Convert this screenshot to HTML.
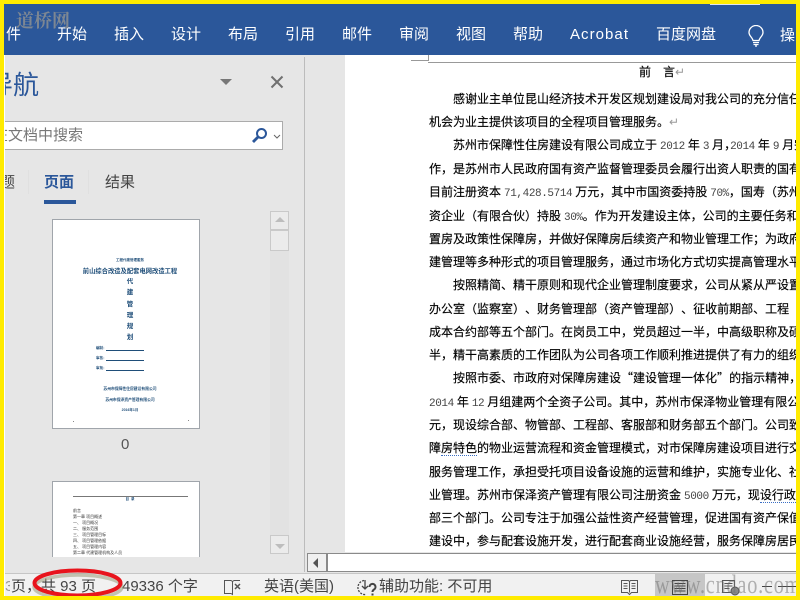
<!DOCTYPE html>
<html lang="zh"><head><meta charset="utf-8"><title>Word</title>
<style>
html,body{margin:0;padding:0;width:800px;height:600px;overflow:hidden;background:#e6e6e6}
body{position:relative;font-family:"Liberation Sans","Noto Sans CJK SC",sans-serif}
.a{position:absolute;white-space:nowrap}
.tab{position:absolute;top:25px;color:#fff;font-size:15px;line-height:20px;white-space:nowrap}
#doc{position:absolute;left:345px;top:55px;width:451px;height:498px;background:#fff;overflow:hidden}
#doc .l{position:absolute;white-space:nowrap;font-family:"Liberation Serif","WenQuanYi Zen Hei","Noto Sans CJK SC",sans-serif;font-size:12px;line-height:16px;color:#000;left:84px;text-spacing-trim:space-all;-webkit-text-stroke:.15px #000}
#doc .l.i{left:108px}
#doc b{font-weight:normal;color:#444;font-size:11px;font-family:"Liberation Mono",monospace;letter-spacing:-.4px;-webkit-text-stroke:0}
#doc u{display:inline-block;text-decoration:none}
.wv{border-bottom:1px dotted #3b6fc4}
.ret{color:#999;-webkit-text-stroke:0}
.q{font-family:"Noto Sans CJK SC",sans-serif}
.st{position:absolute;top:577px;font-size:15px;line-height:20px;color:#444;white-space:nowrap}
.th{position:absolute;font-size:4px;line-height:5px;color:#1f4e79;white-space:nowrap;text-align:center;font-weight:bold}
.tk{position:absolute;font-size:4px;line-height:5px;color:#333;white-space:nowrap;left:20px}
</style></head><body>

<!-- ribbon -->
<div class="a" style="left:0;top:0;width:800px;height:55px;background:#2b579a"></div>
<div class="tab" style="left:6px;width:15px;overflow:hidden;direction:rtl">文件</div>
<div class="tab" style="left:57px">开始</div>
<div class="tab" style="left:114px">插入</div>
<div class="tab" style="left:171px">设计</div>
<div class="tab" style="left:228px">布局</div>
<div class="tab" style="left:285px">引用</div>
<div class="tab" style="left:342px">邮件</div>
<div class="tab" style="left:399px">审阅</div>
<div class="tab" style="left:456px">视图</div>
<div class="tab" style="left:513px">帮助</div>
<div class="tab" style="left:570px;letter-spacing:1.05px">Acrobat</div>
<div class="tab" style="left:656px">百度网盘</div>
<svg class="a" style="left:747px;top:25px" width="18" height="22" viewBox="0 0 18 22" fill="none" stroke="#fff" stroke-width="1.3"><path d="M6 15.5C5.5 12.5 2 11 2 7.5a7 7 0 0 1 14 0c0 3.500-3.500 5-4 8z"/><path d="M6 17.500h6M6.500 19.500h5M8 21h2"/></svg>
<div class="tab" style="left:780px;top:26px">操</div>
<div class="a" style="left:16px;top:8px;font-family:'Noto Serif CJK SC',serif;font-weight:700;font-size:18px;line-height:24px;color:#7d8793">道桥网</div>

<!-- nav pane -->
<div class="a" style="left:5px;top:55px;width:340px;height:518px;background:#e6e6e6"></div>
<div class="a" style="left:304px;top:57px;width:1px;height:515px;background:#bcbcbc"></div>
<div class="a" style="left:5px;top:68px;width:34px;height:34px;overflow:hidden;direction:rtl;font-size:26px;line-height:34px;color:#2b579a">导航</div>
<div class="a" style="left:220px;top:79px;width:0;height:0;border-left:6px solid transparent;border-right:6px solid transparent;border-top:6px solid #777"></div>
<svg class="a" style="left:270px;top:75px" width="14" height="14" viewBox="0 0 14 14" stroke="#707070" stroke-width="2"><path d="M1.500 1.500l11 11M12.500 1.500l-11 11"/></svg>

<div class="a" style="left:0;top:121px;width:283px;height:29px;background:#fff;border:1px solid #ababab;box-sizing:border-box"></div>
<div class="a" style="left:5px;top:126px;width:78px;height:20px;overflow:hidden;font-size:15px;line-height:20px;color:#777;direction:rtl">在文档中搜索</div>
<svg class="a" style="left:251px;top:127px" width="17" height="17" viewBox="0 0 17 17" fill="none" stroke="#2b579a" stroke-width="2"><circle cx="10.500" cy="6.500" r="4.500"/><path d="M7 10l-5 5" stroke-width="2.800"/></svg>
<svg class="a" style="left:273px;top:134px" width="8" height="6" viewBox="0 0 8 6" fill="none" stroke="#666" stroke-width="1"><path d="M1 1l3 3 3-3"/></svg>

<div class="a" style="left:5px;top:173px;width:10px;height:20px;overflow:hidden;direction:rtl;font-size:15px;line-height:20px;color:#444">标题</div>
<div class="a" style="left:28px;top:170px;width:1px;height:24px;background:#e0e0e0"></div>
<div class="a" style="left:44px;top:173px;font-size:15px;line-height:20px;font-weight:bold;color:#2b579a">页面</div>
<div class="a" style="left:88px;top:170px;width:1px;height:24px;background:#e0e0e0"></div>
<div class="a" style="left:105px;top:173px;font-size:15px;line-height:20px;color:#444">结果</div>
<div class="a" style="left:44px;top:200px;width:32px;height:4px;background:#2b579a"></div>

<!-- thumbnail scrollbar -->
<div class="a" style="left:270px;top:211px;width:19px;height:342px;background:#e2e2e2"></div>
<div class="a" style="left:270px;top:211px;width:19px;height:19px;background:#ebebeb;border:1px solid #c9c9c9;box-sizing:border-box"></div>
<div class="a" style="left:275px;top:217px;width:0;height:0;border-left:5px solid transparent;border-right:5px solid transparent;border-bottom:5px solid #bdbdbd"></div>
<div class="a" style="left:270px;top:230px;width:19px;height:21px;background:#ebebeb;border:1px solid #c9c9c9;box-sizing:border-box"></div>
<div class="a" style="left:270px;top:535px;width:19px;height:19px;background:#ebebeb;border:1px solid #c9c9c9;box-sizing:border-box"></div>
<div class="a" style="left:275px;top:544px;width:0;height:0;border-left:5px solid transparent;border-right:5px solid transparent;border-top:5px solid #bdbdbd"></div>

<!-- thumbnail 1 -->
<div class="a" style="left:52px;top:219px;width:148px;height:210px;background:#fff;border:1px solid #a0a5ab;box-sizing:border-box;overflow:hidden">
  <div class="th" style="left:4px;width:146px;top:38px;font-size:3.500px">工程代建管理服务</div>
  <div class="th" style="left:4px;width:146px;top:48px;font-size:6.300px;line-height:8px">前山综合改造及配套电网改造工程</div>
  <div class="th" style="left:4px;width:146px;top:57px;font-size:6.500px;line-height:10px">代</div>
  <div class="th" style="left:4px;width:146px;top:68px;font-size:6.500px;line-height:10px">建</div>
  <div class="th" style="left:4px;width:146px;top:80px;font-size:6.500px;line-height:10px">管</div>
  <div class="th" style="left:4px;width:146px;top:91px;font-size:6.500px;line-height:10px">理</div>
  <div class="th" style="left:4px;width:146px;top:102px;font-size:6.500px;line-height:10px">规</div>
  <div class="th" style="left:4px;width:146px;top:113px;font-size:6.500px;line-height:10px">划</div>
  <div class="th" style="left:43px;top:126px;font-size:3.500px">编制：</div>
  <div class="a" style="left:53px;top:130px;width:38px;height:1px;background:#1f4e79"></div>
  <div class="th" style="left:43px;top:136px;font-size:3.500px">审核：</div>
  <div class="a" style="left:53px;top:140px;width:38px;height:1px;background:#1f4e79"></div>
  <div class="th" style="left:43px;top:146px;font-size:3.500px">审批：</div>
  <div class="a" style="left:53px;top:150px;width:38px;height:1px;background:#1f4e79"></div>
  <div class="th" style="left:4px;width:146px;top:167px;font-size:3.800px">苏州市保障性住房建设有限公司</div>
  <div class="th" style="left:4px;width:146px;top:178px;font-size:3.800px">苏州市保泽资产管理有限公司</div>
  <div class="th" style="left:4px;width:146px;top:188px;font-size:3.500px">2016年1月</div>
  <div class="a" style="left:20px;top:201px;width:1px;height:1px;background:#888"></div>
  <div class="a" style="left:135px;top:200px;width:1px;height:1px;background:#888"></div>
</div>
<div class="a" style="left:121px;top:436px;font-size:15px;line-height:18px;color:#555">0</div>

<!-- thumbnail 2 -->
<div class="a" style="left:52px;top:481px;width:148px;height:76px;background:#fff;border:1px solid #a0a5ab;border-bottom:none;box-sizing:border-box;overflow:hidden">
  <div class="a" style="left:20px;top:14px;width:115px;height:1px;background:#777"></div>
  <div class="th" style="left:4px;width:146px;top:15px;font-size:3.500px">目 &nbsp;录</div>
  <div class="tk" style="top:26px">前言</div>
  <div class="tk" style="top:32px">第一章 项目概述</div>
  <div class="tk" style="top:38px">一、 项目概况</div>
  <div class="tk" style="top:44px">二、 服务范围</div>
  <div class="tk" style="top:50px">三、 项目管理目标</div>
  <div class="tk" style="top:56px">四、 项目管理依据</div>
  <div class="tk" style="top:62px">五、 项目管理内容</div>
  <div class="tk" style="top:68px">第二章 代建管理机构及人员</div>
</div>

<!-- document -->
<div id="doc">
  <div class="a" style="left:66px;top:5px;width:18px;height:1px;background:#999"></div>
  <div class="a" style="left:83px;top:0;width:1px;height:6px;background:#999"></div>
  <div class="a" style="left:83px;top:7px;width:368px;height:1px;background:#999"></div>
  <div class="l" style="left:294px;top:9px">前&nbsp;&nbsp;&nbsp;&nbsp;言<span class="ret">↵</span></div>
  <div class="l i" style="top:36px">感谢业主单位昆山经济技术开发区规划建设局对我公司的充分信任</div>
  <div class="l" style="top:59px">机会为业主提供该项目的全程项目管理服务。<span class="ret">↵</span></div>
  <div class="l i" style="top:82px">苏州市保障性住房建设有限公司成立于 <b>2012</b> 年 <b>3</b> 月<span style="margin-right:-6px">，</span><b>2014</b> 年 <b>9</b> 月完</div>
  <div class="l" style="top:106px">作，是苏州市人民政府国有资产监督管理委员会履行出资人职责的国有</div>
  <div class="l" style="top:129px">目前注册资本 <b>71,428.5714</b> 万元，其中市国资委持股 <b>70%</b>，国寿（苏州）</div>
  <div class="l" style="top:153px">资企业（有限合伙）持股 <b>30%</b>。作为开发建设主体，公司的主要任务和</div>
  <div class="l" style="top:176px">置房及政策性保障房，并做好保障房后续资产和物业管理工作；为政府</div>
  <div class="l" style="top:199px">建管理等多种形式的项目管理服务，通过市场化方式切实提高管理水平</div>
  <div class="l i" style="top:222px">按照精简、精干原则和现代企业管理制度要求，公司从紧从严设置</div>
  <div class="l" style="top:246px">办公室（监察室<u>）</u><u>、</u>财务管理部（资产管理部<u>）</u><u>、</u>征收前期部、工程 ‧</div>
  <div class="l" style="top:269px">成本合约部等五个部门。在岗员工中，党员超过一半，中高级职称及硕</div>
  <div class="l" style="top:292px">半，精干高素质的工作团队为公司各项工作顺利推进提供了有力的组织</div>
  <div class="l i" style="top:315px">按照市委、市政府对保障房建设<span class="q">“</span>建设管理一体化<span class="q">”</span>的指示精神，</div>
  <div class="l" style="top:339px"><b>2014</b> 年 <b>12</b> 月组建两个全资子公司。其中，苏州市保泽物业管理有限公司</div>
  <div class="l" style="top:362px">元，现设综合部、物管部、工程部、客服部和财务部五个部门。公司致</div>
  <div class="l" style="top:385px">障<span class="wv">房特色</span>的物业运营流程和资金管理模式，对市保障房建设项目进行交</div>
  <div class="l" style="top:409px">服务管理工作，承担受托项目设备设施的运营和维护，实施专业化、社</div>
  <div class="l" style="top:432px">业管理。苏州市保泽资产管理有限公司注册资金 <b>5000</b> 万元，现<span class="wv">设行政</span></div>
  <div class="l" style="top:455px">部三个部门。公司专注于加强公益性资产经营管理，促进国有资产保值</div>
  <div class="l" style="top:478px">建设中，参与配套设施开发，进行配套商业设施经营，服务保障房居民</div>
</div>

<!-- horizontal scrollbar -->
<div class="a" style="left:307px;top:552px;width:489px;height:21px;background:#e6e6e6"></div>
<div class="a" style="left:307px;top:553px;width:20px;height:19px;background:#f0f0f0;border:1px solid #8a8a8a;box-sizing:border-box"></div>
<div class="a" style="left:313px;top:558px;width:0;height:0;border-top:5px solid transparent;border-bottom:5px solid transparent;border-right:5px solid #555"></div>
<div class="a" style="left:327px;top:553px;width:469px;height:19px;background:#fff;border:1px solid #8a8a8a;border-right:none;box-sizing:border-box"></div>

<!-- status bar -->
<div class="a" style="left:0;top:573px;width:800px;height:27px;background:#f1f1f1;border-top:1px solid #c6c6c6;box-sizing:border-box"></div>
<div class="st" style="left:5px;color:#999;width:5px;overflow:hidden">3</div>
<div class="st" style="left:11px">页，共 93 页</div>
<div class="st" style="left:122px">49336 个字</div>
<svg class="a" style="left:223px;top:579px" width="19" height="17" viewBox="0 0 19 17" fill="none" stroke="#555" stroke-width="1"><path d="M1.500 1.500h6.500l1.500 1v13l-1.500-1H1.500zM9.500 2.500l1.500-1h6"/><path d="M12 5l5 5M17 5l-5 5" stroke-width="1.500"/></svg>
<div class="st" style="left:264px">英语(美国)</div>
<svg class="a" style="left:357px;top:578px" width="20" height="19" viewBox="0 0 20 19" fill="none" stroke="#444" stroke-width="1.300"><path d="M7 2.500a7 7 0 1 0 2 14" stroke-dasharray="2 1.200"/><path d="M5 8l3 3 3-3M8 2v8"/><path d="M12.500 9a3 3 0 1 1 4.500 2.500c-1 .7-1.500 1.200-1.500 2.500M15.500 15.500v2" stroke-width="2"/></svg>
<div class="st" style="left:379px">辅助功能: 不可用</div>

<svg class="a" style="left:620px;top:579px" width="19" height="17" viewBox="0 0 19 17" fill="none" stroke="#555" stroke-width="1"><path d="M1.500 1.500h7l1 1 1-1h7v12h-6l-2 2-2-2h-6zM9.500 2.500v11"/><path d="M3.500 4.500h4M3.500 7h4M3.500 9.500h4M11.500 4.500h4M11.500 7h4M11.500 9.500h4"/></svg>
<div class="a" style="left:655px;top:574px;width:50px;height:22px;background:#c6c6c6"></div>
<svg class="a" style="left:671px;top:579px" width="18" height="17" viewBox="0 0 18 17" fill="none" stroke="#444" stroke-width="1"><path d="M1.500 1.500h15v14h-15zM3.500 4.500h11M3.500 7h11M3.500 9.500h11M3.500 12h11"/></svg>
<svg class="a" style="left:721px;top:579px" width="20" height="17" viewBox="0 0 20 17" fill="none" stroke="#555" stroke-width="1"><path d="M1.500 1.500h12v12h-12zM3.500 4.500h8M3.500 7h8M3.500 9.500h5"/><circle cx="14" cy="12" r="4" fill="#888"/></svg>
<div class="a" style="left:762px;top:586px;width:34px;height:1px;background:#444"></div>
<div class="a" style="left:772px;top:586px;width:6px;height:1px;background:#f1f1f1"></div>

<!-- watermark bottom -->
<div class="a" style="left:655px;top:570px;font-family:'Liberation Serif',serif;font-size:26px;line-height:30px;color:rgba(110,110,110,.5);transform:scaleX(.78);transform-origin:left top;letter-spacing:1px">www.cndao.com</div>

<!-- red ellipse -->
<svg class="a" style="left:28px;top:564px" width="100" height="36" viewBox="0 0 100 36" fill="none"><ellipse cx="50" cy="21" rx="44" ry="12" stroke="#9a9a7a" stroke-width="3.500" opacity=".55" transform="translate(0 2)"/><ellipse cx="49.500" cy="19" rx="43" ry="12.500" stroke="#e8141c" stroke-width="4"/></svg>

<!-- yellow frame -->
<div class="a" style="left:0;top:0;width:800px;height:4px;background:#ffeb00"></div>
<div class="a" style="left:710px;top:4px;width:50px;height:1px;background:#dfe5ee"></div>
<div class="a" style="left:0;top:596px;width:800px;height:4px;background:#ffeb00"></div>
<div class="a" style="left:0;top:0;width:4px;height:600px;background:#ffeb00"></div>
<div class="a" style="left:796px;top:0;width:4px;height:600px;background:#ffeb00"></div>
<div class="a" style="left:4px;top:55px;width:1px;height:541px;background:#fff"></div>
</body></html>
